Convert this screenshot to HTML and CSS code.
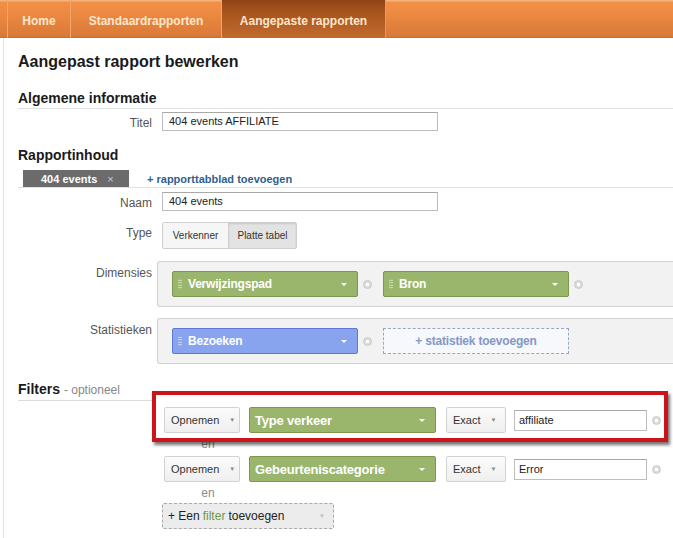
FILE: index.html
```html
<!DOCTYPE html>
<html>
<head>
<meta charset="utf-8">
<link rel="stylesheet" href="styles.css">
</head>
<body>
<div class="nav">
  <div class="nav-start"></div>
  <div class="nav-tab">Home</div>
  <div class="nav-tab wide">Standaardrapporten</div>
  <div class="nav-tab active">Aangepaste rapporten</div>
</div>
<div class="page">
  <h1 class="title">Aangepast rapport bewerken</h1>

  <h2 class="section first">Algemene informatie</h2>
  <div class="row row-titel">
    <div class="label">Titel</div>
    <div class="field"><div class="input">404 events AFFILIATE</div></div>
  </div>

  <h2 class="section plain">Rapportinhoud</h2>
  <div class="tabs">
    <div class="rtab">404 events <span class="x">×</span></div>
    <div class="addtab">+ rapporttabblad toevoegen</div>
  </div>
  <div class="row row-naam">
    <div class="label">Naam</div>
    <div class="field"><div class="input">404 events</div></div>
  </div>
  <div class="row row-type">
    <div class="label label-top">Type</div>
    <div class="field">
      <div class="seg"><span class="seg-a">Verkenner</span><span class="seg-b">Platte tabel</span></div>
    </div>
  </div>
  <div class="row row-panel">
    <div class="label label-panel">Dimensies</div>
    <div class="panel">
      <div class="chip green"><span class="grip"></span>Verwijzingspad<span class="caret"></span></div>
      <span class="rm"></span>
      <div class="chip green"><span class="grip"></span>Bron<span class="caret"></span></div>
      <span class="rm"></span>
    </div>
  </div>
  <div class="row row-panel row-stat">
    <div class="label label-panel">Statistieken</div>
    <div class="panel">
      <div class="chip blue"><span class="grip"></span>Bezoeken<span class="caret"></span></div>
      <span class="rm"></span>
      <div class="addstat">+ statistiek toevoegen</div>
    </div>
  </div>

  <h2 class="section filters-h">Filters <span class="opt">- optioneel</span></h2>
  <div class="filters">
    <div class="frow">
      <div class="btn opn">Opnemen <span class="tri">▼</span></div>
      <div class="chip green fchip">Type verkeer<span class="caret"></span></div>
      <div class="btn exact">Exact <span class="tri">▼</span></div>
      <div class="input finput">affiliate</div>
      <span class="rm"></span>
    </div>
    <div class="en">en</div>
    <div class="frow">
      <div class="btn opn">Opnemen <span class="tri">▼</span></div>
      <div class="chip green fchip">Gebeurteniscategorie<span class="caret"></span></div>
      <div class="btn exact">Exact <span class="tri">▼</span></div>
      <div class="input finput">Error</div>
      <span class="rm"></span>
    </div>
    <div class="en en-last">en</div>
    <div class="addfilter">+ Een <span class="g">filter</span> toevoegen<span class="tri2">▼</span></div>
    <div class="redbox"></div>
  </div>
</div>
</body>
</html>
```

FILE: styles.css
```css
html, body {
  margin: 0;
  padding: 0;
  background: #fff;
  overflow: hidden;
}
body {
  width: 673px;
  height: 538px;
  font-family: "Liberation Sans", Arial, sans-serif;
  color: #222;
}
.nav {
  height: 38px;
  display: flex;
  background: linear-gradient(#f6b27a 0, #f6b27a 1px, #f39048 2px, #ee8a42 12px, #d97a38 36px, #c56d32 38px);
}
.nav-start {
  width: 7px;
  border-right: 1px solid #f5a56a;
}
.nav-tab {
  width: 63px;
  border-right: 1px solid #f5a56a;
  font-size: 12px;
  font-weight: bold;
  color: #fde7cc;
  display: flex;
  align-items: center;
  justify-content: center;
  padding-top: 3px;
  box-sizing: border-box;
}
.nav-tab.wide {
  width: 151px;
}
.nav-tab.active {
  width: 164px;
  background: linear-gradient(#8e4315 0, #a4531c 10px, #b9642a 30px, #c26b2e 38px);
  border-right: 1px solid #e8995c;
}
.page {
  margin-left: 3px;
  border-left: 1px solid #e2e2e2;
  padding-left: 14px;
  height: 500px;
}
.title {
  margin: 0;
  padding-top: 14px;
  font-size: 16px;
  line-height: 20px;
  font-weight: bold;
  color: #1a1a1a;
}
.section {
  margin: 0;
  margin-top: 10px;
  font-size: 14px;
  line-height: 18px;
  font-weight: bold;
  color: #1a1a1a;
  border-bottom: 1px solid #e0e0e0;
  padding-bottom: 1px;
}
.section.first {
  margin-top: 17px;
}
.section.plain {
  border-bottom: none;
  margin-top: 15px;
  padding-bottom: 0;
}
.row {
  display: flex;
  align-items: center;
}
.label {
  width: 134px;
  text-align: right;
  font-size: 12px;
  color: #555;
  flex: none;
}
.field {
  margin-left: 10px;
}
.row-titel {
  margin-top: 3px;
}
.row-titel .label {
  padding-top: 2px;
}
.input {
  width: 268px;
  height: 17px;
  border: 1px solid #bdbdbd;
  border-top-color: #a8a8a8;
  font-size: 11px;
  line-height: 17px;
  padding-left: 6px;
  color: #222;
  background: #fff;
}
.tabs {
  margin-top: 6px;
  height: 17px;
  border-bottom: 1px solid #e0e0e0;
  display: flex;
  align-items: stretch;
}
.rtab {
  margin-left: 5px;
  width: 106px;
  background: #6b6b6b;
  color: #fff;
  font-size: 11px;
  font-weight: bold;
  display: flex;
  align-items: center;
  padding-left: 18px;
  box-sizing: border-box;
}
.rtab .x {
  color: #c8c8c8;
  font-weight: normal;
  margin-left: 10px;
  font-size: 11px;
}
.addtab {
  margin-left: 18px;
  font-size: 11px;
  font-weight: bold;
  color: #305f8c;
  display: flex;
  align-items: center;
}
.row-naam {
  margin-top: 4px;
}
.row-naam .label {
  padding-top: 2px;
}
.row-type {
  margin-top: 11px;
  align-items: flex-start;
}
.label-top {
  padding-top: 4px;
}
.seg {
  display: flex;
  height: 25px;
  border: 1px solid #cfcfcf;
  border-radius: 2px;
  font-size: 10px;
  color: #333;
  overflow: hidden;
}
.seg span {
  display: flex;
  align-items: center;
  justify-content: center;
}
.seg-a {
  width: 65px;
  background: #f6f6f6;
  border-right: 1px solid #d0d0d0;
}
.seg-b {
  width: 67px;
  background: #e3e3e3;
  box-shadow: inset 0 1px 2px rgba(0,0,0,0.12);
}
.row-panel {
  margin-top: 12px;
  align-items: flex-start;
}
.row-stat {
  margin-top: 11px;
}
.label-panel {
  padding-top: 5px;
}
.panel {
  margin-left: 5px;
  width: 560px;
  height: 44px;
  background: #f2f2f2;
  border: 1px solid #d2d2d2;
  border-right: none;
  border-radius: 3px 0 0 3px;
  display: flex;
  align-items: center;
  padding-left: 14px;
  box-sizing: content-box;
}
.chip {
  position: relative;
  width: 184px;
  height: 24px;
  border: 1px solid #7c9650;
  border-radius: 2px;
  color: #fff;
  font-size: 12px;
  font-weight: bold;
  display: flex;
  align-items: center;
  box-sizing: content-box;
  letter-spacing: -0.2px;
}
.chip.green {
  background: #9ab56c;
}
.chip.blue {
  background: #88a4ef;
  border-color: #5c7ad2;
}
.grip {
  width: 4px;
  height: 11px;
  margin-left: 5px;
  margin-right: 6px;
  background-image: radial-gradient(circle, rgba(255,255,255,0.65) 0.7px, transparent 0.9px);
  background-size: 2px 2.5px;
  flex: none;
}
.caret {
  position: absolute;
  right: 10px;
  top: 11px;
  width: 0;
  height: 0;
  border-left: 3px solid transparent;
  border-right: 3px solid transparent;
  border-top: 3px solid #fff;
}
.rm {
  width: 7px;
  height: 7px;
  border: 1px solid #c9c9c9;
  border-radius: 50%;
  margin-left: 5px;
  margin-right: 11px;
  background: radial-gradient(circle, #fff 1.5px, #dcdcdc 2px);
  flex: none;
}
.addstat {
  width: 184px;
  height: 24px;
  border: 1px dashed #9aa6c6;
  background: #f6f8fc;
  color: #8597c4;
  font-size: 12px;
  font-weight: bold;
  display: flex;
  align-items: center;
  justify-content: center;
  letter-spacing: -0.2px;
}
.filters-h {
  margin-top: 16px;
  width: 134px;
  border-bottom-color: #dcdcdc;
}
.opt {
  font-size: 12px;
  font-weight: normal;
  color: #888;
}
.filters {
  position: relative;
  padding-left: 146px;
  padding-top: 6px;
}
.frow {
  display: flex;
  align-items: center;
  height: 26px;
}
.btn {
  height: 24px;
  border: 1px solid #d2d2d2;
  border-radius: 2px;
  background: linear-gradient(#fbfbfb, #efefef);
  font-size: 11px;
  color: #333;
  display: flex;
  align-items: center;
  box-sizing: content-box;
}
.btn .tri {
  font-size: 6px;
  color: #888;
  margin-left: 10px;
}
.opn {
  width: 68px;
  padding-left: 6px;
}
.exact {
  width: 52px;
  padding-left: 6px;
  margin-left: 10px;
}
.fchip {
  margin-left: 9px;
  font-size: 13px;
  padding-left: 5px;
  width: 180px;
}
.finput {
  width: 127px;
  height: 19px;
  line-height: 19px;
  margin-left: 8px;
  padding-left: 4px;
}
.frow .rm {
  margin-left: 5px;
}
.en {
  width: 88px;
  text-align: center;
  font-size: 12px;
  color: #8a8a8a;
  line-height: 20px;
  padding-top: 1px;
  height: 22px;
}
.en.en-last {
  height: 20px;
}
.addfilter {
  margin-left: -2px;
  width: 165px;
  height: 24px;
  border: 1px dashed #aaa;
  border-radius: 2px;
  background: #ececec;
  font-size: 12px;
  color: #222;
  display: flex;
  align-items: center;
  padding-left: 5px;
  position: relative;
}
.addfilter .g {
  color: #6c9a3e;
  margin: 0 3px;
}
.addfilter .tri2 {
  position: absolute;
  right: 8px;
  top: 9px;
  font-size: 6px;
  color: #bbb;
}
.redbox {
  position: absolute;
  left: 134px;
  top: -10px;
  width: 508px;
  height: 43px;
  border: 4px solid #cc141b;
  box-shadow: 2px 3px 3px rgba(0,0,0,0.55);
}
```
